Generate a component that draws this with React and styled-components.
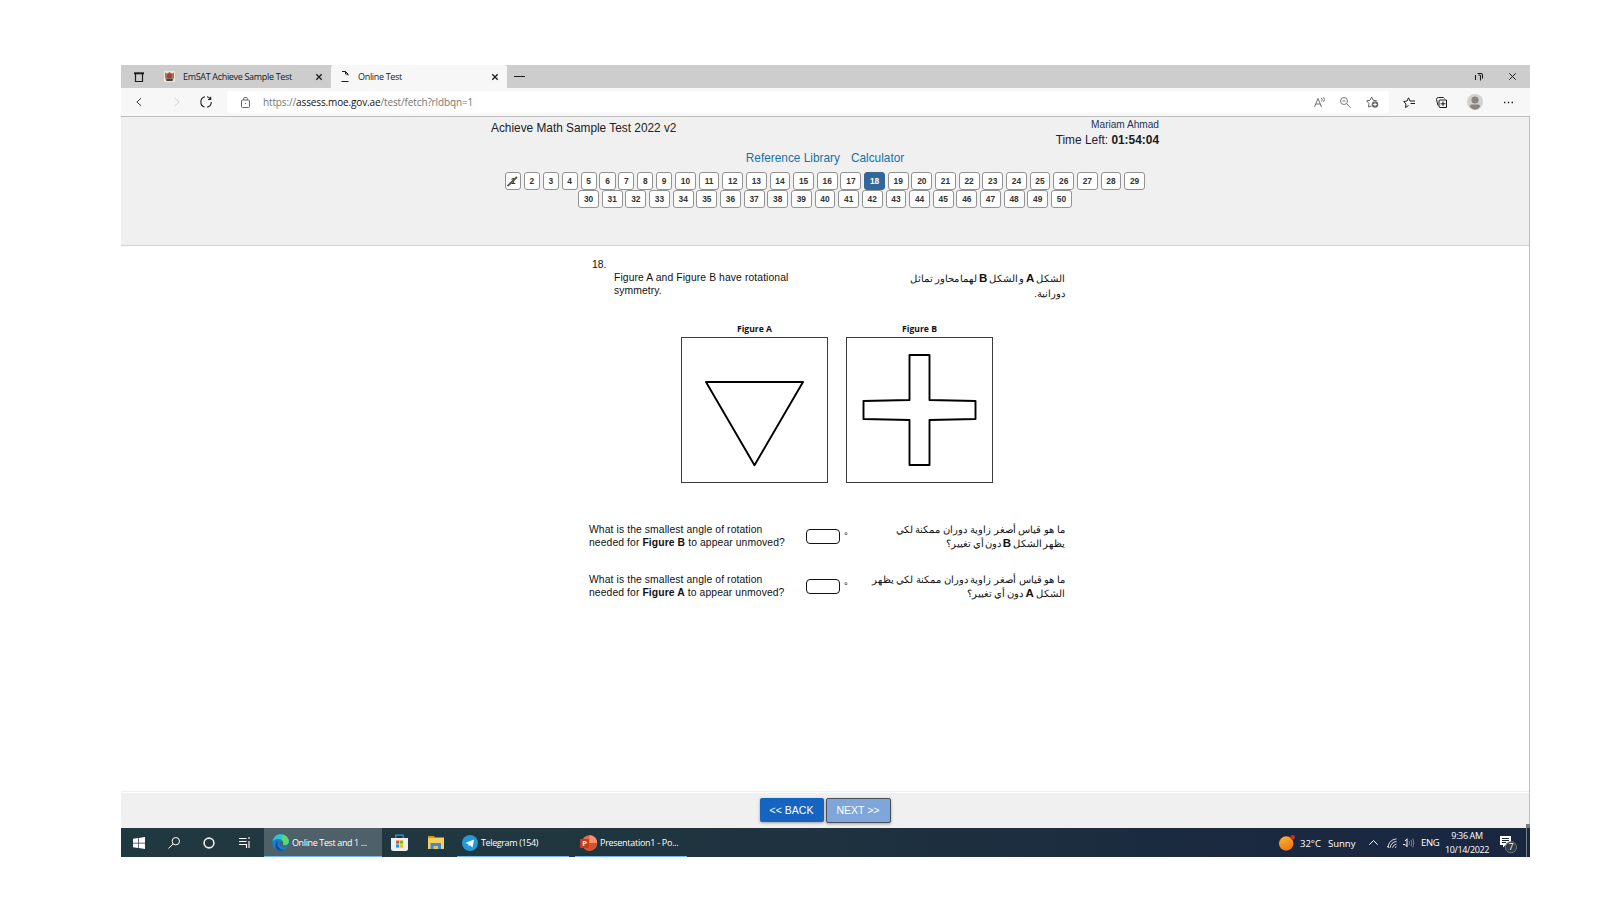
import React from 'react';
import styled, { createGlobalStyle } from 'styled-components';

const GlobalStyle = createGlobalStyle`
  * { box-sizing: border-box; }
  body { margin: 0; background: #fff; overflow: hidden; }
`;

const ui = "'Open Sans', 'Noto Sans', sans-serif";
const arial = "'Liberation Sans', Arial, sans-serif";

const Page = styled.div`
  width: 1600px;
  height: 900px;
  padding: 65px 70px 43px 121px;
  background: #fff;
`;
const Desktop = styled.div`
  width: 1409px;
  height: 792px;
  display: flex;
  flex-direction: column;
  font-family: ${arial};
`;
const Icon = styled.svg`
  display: block;
  flex: none;
  width: ${p => p.$w}px;
  height: ${p => p.$h || p.$w}px;
  margin-left: ${p => p.$ml || 0}px;
  fill: none;
  stroke: ${p => p.$c || '#1c1c1c'};
  stroke-width: ${p => p.$s || 1};
  overflow: visible;
`;
const Spacer = styled.div`
  flex: 1;
`;

/* ---------- browser chrome ---------- */
const TabStrip = styled.div`
  height: 23px;
  flex: none;
  display: flex;
  align-items: center;
  background: #cdcdcd;
  padding-right: 14px;
`;
const Tab = styled.div`
  height: 23px;
  width: ${p => p.$w}px;
  display: flex;
  align-items: center;
  padding: 0 9px 0 10px;
  margin-left: ${p => p.$ml || 0}px;
  background: ${p => (p.$active ? '#f7f7f7' : 'transparent')};
  border-radius: 3px 3px 0 0;
`;
const TabTitle = styled.span`
  flex: 1;
  margin-left: ${p => p.$ml}px;
  font: 9px/12px ${ui};
  letter-spacing: -0.32px;
  white-space: nowrap;
  color: #1a1a1a;
`;
const Toolbar = styled.div`
  height: 28px;
  flex: none;
  display: flex;
  align-items: center;
  background: #f7f7f7;
  padding: 0 15px;
`;
const AddressBar = styled.div`
  width: 1162px;
  height: 22px;
  margin-left: 15px;
  padding: 0 10px 0 14px;
  display: flex;
  align-items: center;
  background: #fff;
  border-radius: 3px;
`;
const Url = styled.span`
  margin-left: 13px;
  font: 10px/14px ${ui};
  letter-spacing: -0.13px;
  color: #767676;
  white-space: nowrap;
  b { font-weight: 400; color: #111; }
`;

/* ---------- test page ---------- */
const Viewport = styled.div`
  position: relative;
  height: 712px;
  flex: none;
  display: flex;
  flex-direction: column;
  border-top: 1px solid #bdbdbd;
  border-right: 1px solid #bdbdbd;
`;
const ResizeCorner = styled.div`
  position: absolute;
  right: -1px;
  bottom: 0;
  width: 4px;
  height: 4px;
  background: #7d7d7d;
`;
const TestHeader = styled.header`
  height: 129px;
  flex: none;
  background: #f0f0f0;
  border-bottom: 1px solid #d2d2d2;
`;
const TitleRow = styled.div`
  display: flex;
  justify-content: space-between;
  width: 668px;
  height: 34px;
  margin-left: 370px;
  padding-top: 2px;
`;
const Title = styled.div`
  padding-top: 1px;
  font-size: 11.85px;
  line-height: 16px;
  color: #222;
`;
const User = styled.div`
  text-align: right;
  font-size: 10.1px;
  line-height: 12px;
  color: #1c3550;
`;
const TimeLeft = styled.div`
  margin-top: 1px;
  font-size: 11.9px;
  line-height: 16px;
  color: #1c1c3a;
  b { color: #1a1a1a; }
`;
const Links = styled.div`
  display: flex;
  justify-content: center;
  gap: 11px;
  height: 21px;
  font-size: 11.85px;
  line-height: 14px;
  color: #1672a8;
`;
const NumberRow = styled.div`
  display: flex;
  justify-content: center;
  gap: 2.8px;
  height: 18px;
`;
const NumberButton = styled.div`
  position: relative;
  flex: none;
  width: ${p => (p.$wide ? 20.85 : 16.1)}px;
  height: 18px;
  border: 1px solid ${p => (p.$active ? '#336699' : '#929292')};
  border-radius: 3px;
  background: ${p => (p.$active ? '#336699' : '#fff')};
  color: ${p => (p.$active ? '#fff' : '#333')};
  font-weight: 700;
  font-size: 8.4px;
  line-height: 16px;
  text-align: center;
`;
const Strike = styled.svg`
  position: absolute;
  left: 1px;
  top: 3px;
  width: 11px;
  height: 11px;
`;
const Question = styled.main`
  flex: 1;
  width: 476px;
  margin-left: 468px;
  font-size: 10.35px;
  line-height: 13px;
  color: #111;
`;
const QuestionNumber = styled.div`
  padding: 12px 0 0 3px;
  height: 25px;
`;
const Stem = styled.div`
  display: flex;
  justify-content: space-between;
  padding-left: 25px;
  height: 52px;
`;
const English = styled.div`
  white-space: nowrap;
  letter-spacing: 0.1px;
`;
const Arabic = styled.div`
  direction: rtl;
  text-align: right;
  font-size: ${p => p.$size || 10}px;
  line-height: ${p => p.$lh || 14}px;
  white-space: nowrap;
  b { font-size: 11.5px; line-height: 10px; }
`;
const ArabicLine = styled.div`
  word-spacing: ${p => p.$ws || 0}px;
`;
const Figures = styled.div`
  display: flex;
  gap: 18px;
  padding-left: 92px;
  height: 200px;
`;
const Figure = styled.figure`
  margin: 0;
  width: 147px;
`;
const Caption = styled.figcaption`
  font: 700 8.6px/13px ${ui};
  text-align: center;
  height: 14px;
`;
const FigureBox = styled.svg`
  display: block;
  width: 147px;
  height: 146px;
  border: 1px solid #3c3c3c;
  fill: none;
  stroke: #000;
  stroke-width: 1.9;
  stroke-linejoin: round;
`;
const Prompt = styled.div`
  display: flex;
  height: 50px;
`;
const PromptText = styled(English)`
  width: 217px;
`;
const Answer = styled.input`
  width: 34px;
  height: 15px;
  margin: 6px 0 0;
  padding: 0 3px;
  border: 1px solid #111;
  border-radius: 4px;
  background: #fff;
`;
const Degree = styled.span`
  flex: 1;
  padding: 6px 0 0 4px;
  font-size: 9.5px;
  color: #000;
`;
const TestFooter = styled.footer`
  height: 37px;
  flex: none;
  display: flex;
  justify-content: center;
  gap: 2px;
  padding-top: 6px;
  background: #f0f0f0;
  border-top: 1px solid #efefef;
  box-shadow: inset 0 1px 0 #fff;
`;
const NavButton = styled.button`
  width: ${p => (p.$next ? 65 : 64)}px;
  height: ${p => (p.$next ? 25 : 24)}px;
  padding: ${p => (p.$next ? '0 0 1px' : '1px 0 0')};
  border: ${p => (p.$next ? '1px solid #4a4f58' : '0')};
  border-radius: 2px;
  background: ${p => (p.$next ? '#7fa6da' : '#1565c0')};
  color: #fff;
  font: 10.5px/21px ${arial};
  box-shadow: 0 1px 3px rgba(0, 0, 0, 0.35);
`;

/* ---------- taskbar ---------- */
const Taskbar = styled.div`
  height: 29px;
  flex: none;
  display: flex;
  align-items: center;
  background: linear-gradient(90deg, #20383f 0%, #20373f 30%, #1d2f3f 60%, #1a2840 85%, #1a2740 100%);
  color: #fff;
  font: 9.5px/13px ${ui};
  white-space: nowrap;
`;
const Task = styled.div`
  width: ${p => p.$w}px;
  height: 29px;
  margin-left: ${p => p.$ml || 0}px;
  padding: 1px 0 0 ${p => p.$pl}px;
  display: flex;
  align-items: center;
  gap: 3px;
  background: ${p => (p.$active ? '#4e6068' : 'transparent')};
  border-bottom: 1px solid #76b9ed;
  font-size: 9px;
  letter-spacing: ${p => p.$ls || -0.38}px;
`;
const TrayText = styled.span`
  margin-left: ${p => p.$ml || 0}px;
  padding-top: ${p => p.$pt || 0}px;
  width: ${p => p.$w}px;
  letter-spacing: ${p => p.$ls || 0}px;
`;
const Clock = styled.div`
  width: 44px;
  margin-left: 7px;
  text-align: center;
  font-size: 9px;
  line-height: 13.5px;
  letter-spacing: -0.38px;
`;
const ShowDesktop = styled.div`
  width: 1px;
  height: 29px;
  margin: 0 3px 0 9px;
  background: #77808c;
`;

const CloseIcon = () => (
  <Icon $w={6} viewBox="0 0 6 6" $s={1.3}><path d="M.3.3l5.4 5.4M5.7.3L.3 5.7" /></Icon>
);

const range = (a, b) => Array.from({ length: b - a + 1 }, (_, i) => a + i);

const Numbers = ({ from, to }) => (
  <NumberRow>
    {range(from, to).map(n => (
      <NumberButton key={n} $wide={n > 9} $active={n === 18}>
        {n}
        {n === 1 && (
          <Strike viewBox="0 0 11 11"><path d="M.5 10L10 1" stroke="#555" strokeWidth="1.8" /></Strike>
        )}
      </NumberButton>
    ))}
  </NumberRow>
);

const Chrome = () => (
  <>
    <TabStrip>
      <Icon $w={10} $ml={13} viewBox="0 0 10 10" $s={1.2}><path d="M1.500 2v7.500h7V2" /><path d="M0 1.300h10" strokeWidth="2" /></Icon>
      <Tab $w={177} $ml={10}>
        <Icon $w={11} viewBox="0 0 11 11" $c="none">
          <rect width="11" height="11" fill="#eee6dc" />
          <path d="M1 1.500l2 1L5.500 1 8 2.500l2-1v5L8.500 10h-6L1 6.500z" fill="#957a68" />
          <circle cx="5.500" cy="5" r="2.400" fill="#b3302c" />
          <path d="M2.500 8h6v2h-6z" fill="#4a4038" />
          <path d="M4.500 4.500h2v1h-2z" fill="#4d7a50" />
        </Icon>
        <TabTitle $ml={8}>EmSAT Achieve Sample Test</TabTitle>
        <CloseIcon />
      </Tab>
      <Tab $w={176} $active>
        <Icon $w={8} $h={11} viewBox="0 0 8 11"><path d="M1 .5h3.500L7 3v1.500M4.500.5V3H7M.5 10.500h7" /></Icon>
        <TabTitle $ml={9}>Online Test</TabTitle>
        <CloseIcon />
      </Tab>
      <Icon $w={11} $ml={7} viewBox="0 0 11 11"><path d="M0 5.500h11" /></Icon>
      <Spacer />
      <Icon $w={8} viewBox="0 0 8 8" $s={1.1}><path d="M.5 2v5M2.500.5H6q1.500 0 1.500 1.500v3.500M3.500 2h1q1 0 1 1V7.500" /></Icon>
      <Icon $w={7} $ml={26} viewBox="0 0 7 7"><path d="M.3.3l6.400 6.400M6.700.3L.3 6.700" /></Icon>
    </TabStrip>
    <Toolbar>
      <Icon $w={6} $h={10} viewBox="0 0 7 10"><path d="M6 .5L1 5l5 4.500" /></Icon>
      <Icon $w={6} $h={10} $ml={32} viewBox="0 0 7 10" $c="#c9c9c9"><path d="M1 .5L6 5 1 9.500" /></Icon>
      <Icon $w={12} $ml={20} viewBox="0 0 12 12" $s={1.100}><path d="M5 .8A5.300 5.300 0 0 0 4.500 11M7 11.200A5.300 5.300 0 0 0 11.300 6M7 .8q2 .3 3.300 2.200M8 3.500h2.700V.8" /></Icon>
      <AddressBar>
        <Icon $w={9} $h={11} viewBox="0 0 9 11" $c="#666"><rect x=".5" y="3" width="8" height="7.500" rx="1" /><path d="M2.700 3V1.500q0-1 1-1h1.600q1 0 1 1V3M4 6.500h1.200" /></Icon>
        <Url>https://<b>assess.moe.gov.ae</b>/test/fetch?rldbqn=1</Url>
        <Spacer />
        <Icon $w={12} $h={11} viewBox="0 0 12 11" $c="#707070"><path d="M.5 10L4 1.500 7.500 10M1.800 7h4.400M7.500 1q1.500 1.500 0 3.500M9.500.3q2 2 0 4.500" /></Icon>
        <Icon $w={11} $ml={14} viewBox="0 0 11 11" $c="#777"><circle cx="4" cy="4" r="3.500" /><path d="M6.700 6.700l4 4M2.500 4h3" /></Icon>
        <Icon $w={13} $h={12} $ml={15} viewBox="0 0 13 12" $c="#666"><path d="M5.500 10l-3 1 .5-3.500L.7 4.800l3.300-.5L5.700 1l1.600 3.300 3.500.5" /><circle cx="9" cy="8.500" r="3.200" fill="#666" stroke="none" /><path d="M7.200 8.500h3.600M9 6.700v3.600" stroke="#fff" /></Icon>
      </AddressBar>
      <Icon $w={12} $h={11} $ml={14} viewBox="0 0 12 11"><path d="M5.500 8.500L2.500 10.500 3 7 .6 4.500 4 4 5.500.8 7 4h5M7.500 6.500H12" /></Icon>
      <Icon $w={11} $ml={21} viewBox="0 0 11 11"><path d="M2 8.500l-1.500-6q0-2 2-2h5l1 1M3 9V4q0-1 1-1h6.500v7.500H4q-1 0-1-1.500zM4.500 6.800h5M7 4.500V9" /></Icon>
      <Icon $w={16} $ml={20} viewBox="0 0 16 16" $c="none"><circle cx="8" cy="8" r="8" fill="#d3d0cd" /><circle cx="8" cy="6" r="3.600" fill="#8a8480" /><path d="M2.800 12.500q0-2 2-2h6.400q2 0 2 2Q11 15.700 8 15.700t-5.200-3.200z" fill="#8a8480" /></Icon>
      <Icon $w={9} $h={3} $ml={21} viewBox="0 0 9 3" $s={1.300}><path d="M0 1.500h1.400M3.800 1.500h1.400M7.600 1.500H9" /></Icon>
    </Toolbar>
  </>
);

const TestPage = () => (
  <Viewport>
    <TestHeader>
      <TitleRow>
        <Title>Achieve Math Sample Test 2022 v2</Title>
        <User>
          Mariam Ahmad
          <TimeLeft>Time Left: <b>01:54:04</b></TimeLeft>
        </User>
      </TitleRow>
      <Links><span>Reference Library</span><span>Calculator</span></Links>
      <Numbers from={1} to={29} />
      <Numbers from={30} to={50} />
    </TestHeader>
    <Question>
      <QuestionNumber>18.</QuestionNumber>
      <Stem>
        <English>Figure A and Figure B have rotational<br />symmetry.</English>
        <Arabic $size={9.6} $lh={15}>
          <ArabicLine $ws={-1.05}>الشكل <b>A</b> و الشكل <b>B</b> لهما محاور تماثل</ArabicLine>
          <ArabicLine>دورانية.</ArabicLine>
        </Arabic>
      </Stem>
      <Figures>
        <Figure>
          <Caption>Figure A</Caption>
          <FigureBox viewBox="0 0 145 144"><path d="M24 44h97L72.500 127.200z" /></FigureBox>
        </Figure>
        <Figure>
          <Caption>Figure B</Caption>
          <FigureBox viewBox="0 0 145 144"><path d="M62.500 17h20v45l46 1v18l-46 1v45h-20v-45l-46-1v-18l46-1z" /></FigureBox>
        </Figure>
      </Figures>
      <Prompt>
        <PromptText>What is the smallest angle of rotation<br />needed for <b>Figure B</b> to appear unmoved?</PromptText>
        <Answer /><Degree>°</Degree>
        <Arabic>
          <ArabicLine>ما هو قياس أصغر زاوية دوران ممكنة لكي</ArabicLine>
          <ArabicLine $ws={-1.3}>يظهر الشكل <b>B</b> دون أي تغيير؟</ArabicLine>
        </Arabic>
      </Prompt>
      <Prompt>
        <PromptText>What is the smallest angle of rotation<br />needed for <b>Figure A</b> to appear unmoved?</PromptText>
        <Answer /><Degree>°</Degree>
        <Arabic>
          <ArabicLine $ws={-0.1}>ما هو قياس أصغر زاوية دوران ممكنة لكي يظهر</ArabicLine>
          <ArabicLine $ws={-0.5}>الشكل <b>A</b> دون أي تغيير؟</ArabicLine>
        </Arabic>
      </Prompt>
    </Question>
    <TestFooter>
      <NavButton>&lt;&lt; BACK</NavButton>
      <NavButton $next>NEXT &gt;&gt;</NavButton>
    </TestFooter>
    <ResizeCorner />
  </Viewport>
);

const WindowsBar = () => (
  <Taskbar>
    <Icon $w={12} $ml={12} viewBox="0 0 12 12" $c="none"><path d="M0 1.700L5 1v4.700H0zM5.700.9L12 0v5.700H5.700zM0 6.400h5V11l-5-.7zM5.700 6.400H12V12l-6.300-.9z" fill="#fff" /></Icon>
    <Icon $w={12} $ml={23} viewBox="0 0 12 12" $c="#fff"><circle cx="7.800" cy="4.200" r="3.700" /><path d="M5 7L.5 11.500" /></Icon>
    <Icon $w={12} $ml={23} viewBox="0 0 12 12" $c="#eee" $s={1.600}><circle cx="6" cy="6" r="4.900" /></Icon>
    <Icon $w={11} $ml={24} viewBox="0 0 11 11" $c="#fff" $s={1.1}><path d="M0 1.500h7.500M0 4.500h7.500M0 7.500h7.500V11M10 0v2M10 4v7" /></Icon>
    <Task $w={118} $ml={14} $pl={8} $active>
      <Icon $w={17} viewBox="0 0 17 17" $c="none">
        <circle cx="8.500" cy="8.500" r="8.300" fill="#167fd0" />
        <path d="M.4 7.500C1.500 2.500 5 0 9 .2c4.500.2 8 3.600 7.800 7.300-.2 2.500-2.500 4-5.800 3.300C12.500 8 10 5 6.500 5 3.500 5 1.200 6 .4 7.500z" fill="#2fc2df" />
        <path d="M10.500.4c4 .7 6.400 4 6.300 7-.2 2.600-2.700 4-5.800 3.400 1-2.300 0-4-1-5z" fill="#5ed966" />
        <path d="M5.500 9c-.4 4 3 7 7 6.800C9 18 3 16.500 3.500 11c.2-2.300 1.500-4 4-4.700C6 7 5.600 8 5.500 9z" fill="#0e4f9c" />
        <path d="M7.600 8.500c.3-1.500 3.500-1.300 3.400.8-.1 1-.8 1.300-.6 2 .5 1 3.500 1.200 5.600 0-1.500 2-7 2.500-8.200-.5z" fill="#4e6068" />
      </Icon>
      <span>Online Test and 1 ...</span>
    </Task>
    <Icon $w={17} $ml={9} viewBox="0 0 17 17" $c="none">
      <path d="M4.800 5V1.200h7.400V5" stroke="#2e9be6" strokeWidth="1.200" fill="none" />
      <path d="M0 4h17v10.500q0 2.500-2.500 2.500h-12Q0 17 0 14.500z" fill="#f0f0f0" />
      <path d="M5 6.500h3.200v3.200H5z" fill="#f25022" /><path d="M8.900 6.500h3.200v3.200H8.900z" fill="#7fba00" />
      <path d="M5 10.400h3.200v3.200H5z" fill="#00a4ef" /><path d="M8.900 10.400h3.200v3.200H8.900z" fill="#ffb900" />
    </Icon>
    <Icon $w={16} $h={13} $ml={20} viewBox="0 0 16 13" $c="none"><path d="M0 0h6l1 1.500H0z" fill="#d99b0c" /><path d="M0 1.500h16V13H0z" fill="#fbcf5c" /><path d="M2.500 7H13v6H2.500z" fill="#3f8ad8" /><path d="M5.500 10h4.500v3H5.500z" fill="#f2c04c" /></Icon>
    <Task $w={112} $ml={13} $pl={5}>
      <Icon $w={16} viewBox="0 0 16 16" $c="none"><circle cx="8" cy="8" r="8" fill="#2399d6" /><path d="M3.500 8l8.500-3.500-1.500 8L7.800 10l-.9 1.500L6.300 9z" fill="#fff" /></Icon>
      <span>Telegram (154)</span>
    </Task>
    <Task $w={112} $ml={6} $pl={5} $ls={-0.28}>
      <Icon $w={17} $h={16} viewBox="0 0 17 16" $c="none">
        <circle cx="9.500" cy="8" r="7.700" fill="#ed6c47" /><path d="M9.500.3A7.700 7.700 0 0 1 17.200 8H9.500z" fill="#ff8f6b" /><path d="M1.800 8h15.400a7.700 7.700 0 0 1-15.400 0z" fill="#d35230" />
        <rect y="4" width="9" height="9" rx=".8" fill="#c43e1c" />
        <text x="4.500" y="11.300" fontSize="7.500" fontWeight="700" textAnchor="middle" fill="#fff">P</text>
      </Icon>
      <span>Presentation1 - Po...</span>
    </Task>
    <Spacer />
    <Icon $w={16} $h={16} viewBox="0 0 16 16" $c="none">
      <defs><linearGradient id="sun" x1="0" y1="0" x2=".5" y2="1"><stop stopColor="#f8bb2d" /><stop offset="1" stopColor="#f07818" /></linearGradient></defs>
      <circle cx="7.200" cy="8.500" r="7.200" fill="url(#sun)" /><circle cx="13.700" cy="2.300" r="2.300" fill="#d3291c" />
    </Icon>
    <TrayText $ml={5} $w={28} $pt={1}>32°C</TrayText>
    <TrayText $w={41} $pt={1}>Sunny</TrayText>
    <Icon $w={9} $h={5} viewBox="0 0 9 5" $c="#fff"><path d="M.3 4.700L4.500.6l4.200 4.100" /></Icon>
    <Icon $w={10} $ml={9} viewBox="0 0 10 10" $c="#d8dce2"><path d="M1 9.500Q1.500 2 9.500.8M3.200 9.700Q3.700 4.500 9.500 3.300M5.500 9.700Q6 7 9.500 6M8 9.700L9.500 8.500M.2 8l2 2" /></Icon>
    <Icon $w={11} $h={10} $ml={6} viewBox="0 0 11 10" $c="#fff"><path d="M0 6.500h2l2 2.200V.8L2 3" /><path d="M6 3q1 2 0 4M8 1.800q1.700 3.200 0 6.400M9.800.6q2 4.400 0 8.800" stroke="#8c95a5" strokeWidth=".8" /></Icon>
    <TrayText $ml={7} $w={17} $ls={-0.3}>ENG</TrayText>
    <Clock>9:36 AM<br />10/14/2022</Clock>
    <Icon $w={17} $h={17} $ml={11} viewBox="0 0 17 17" $c="none">
      <path d="M0 2h11v9H5.500L3 13.500V11H0z" fill="#fff" /><path d="M2 4.500h7M2 6.500h7M2 8.500h4" stroke="#1a2740" />
      <circle cx="11" cy="13.200" r="5.600" fill="#333940" stroke="#8c929a" strokeWidth=".7" />
      <text x="11" y="16.400" fontSize="9" textAnchor="middle" fill="#fff">7</text>
    </Icon>
    <ShowDesktop />
  </Taskbar>
);

export default function App() {
  return (
    <Page>
      <GlobalStyle />
      <Desktop>
        <Chrome />
        <TestPage />
        <WindowsBar />
      </Desktop>
    </Page>
  );
}
